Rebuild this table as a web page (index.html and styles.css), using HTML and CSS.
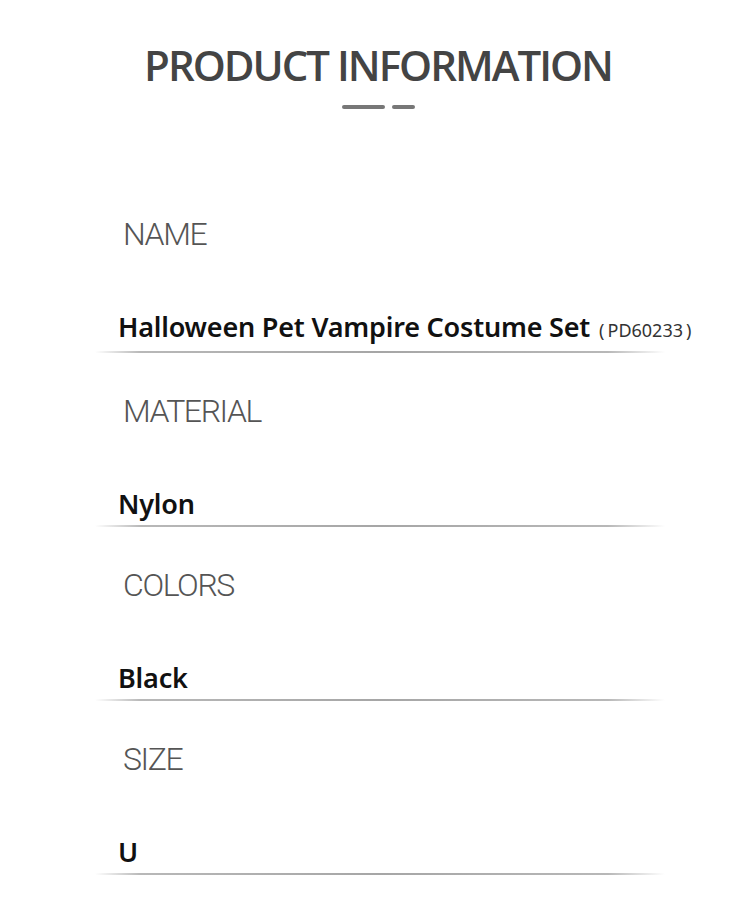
FILE: index.html
```html
<!DOCTYPE html>
<html lang="en">
<head>
<meta charset="utf-8">
<title>Product Information</title>
<link rel="stylesheet" href="styles.css">
</head>
<body>
<div class="page">
  <header class="head">
    <h1 class="title">PRODUCT INFORMATION</h1>
    <div class="dashes"><span class="dash dash-long"></span><span class="dash dash-short"></span></div>
  </header>
  <section class="info">
    <div class="row">
      <div class="label">NAME</div>
      <div class="value">Halloween Pet Vampire Costume Set<span class="code">(&#8201;PD60233&#8201;)</span></div>
    </div>
    <div class="row">
      <div class="label">MATERIAL</div>
      <div class="value">Nylon</div>
    </div>
    <div class="row">
      <div class="label">COLORS</div>
      <div class="value">Black</div>
    </div>
    <div class="row">
      <div class="label">SIZE</div>
      <div class="value">U</div>
    </div>
  </section>
</div>
</body>
</html>
```
FILE: styles.css
```css
html, body {
  margin: 0;
  padding: 0;
  background: #ffffff;
}
.page {
  width: 756px;
  padding-top: 40px;
  box-sizing: border-box;
}
.head {
  display: flex;
  flex-direction: column;
  align-items: center;
}
.title {
  margin: 0;
  font-family: "Open Sans", sans-serif;
  font-weight: 600;
  font-size: 42px;
  line-height: 50px;
  color: #444444;
  letter-spacing: -2px;
}
.dashes {
  display: flex;
  gap: 7px;
  margin-top: 15px;
}
.dash {
  display: block;
  height: 4px;
  border-radius: 2px;
  background: #777777;
}
.dash-long { width: 43px; }
.dash-short { width: 23px; }
.info {
  margin-top: 81px;
  margin-left: 95px;
  width: 570px;
  display: flex;
  flex-direction: column;
}
.row {
  display: flex;
  flex-direction: column;
  padding-bottom: 14px;
}
.row::after {
  content: "";
  display: block;
  height: 2px;
  background: linear-gradient(to right, rgba(170,170,170,0) 0%, #b8b8b8 8%, #a6a6a6 50%, #b8b8b8 90%, rgba(170,170,170,0) 100%);
  margin-top: 4px;
}
.label {
  padding-left: 28px;
  margin-top: 24px;
  font-family: "Roboto", sans-serif;
  font-weight: 300;
  font-size: 32px;
  line-height: 40px;
  color: #555555;
  letter-spacing: -1.4px;
}
.value {
  padding-left: 23px;
  margin-top: 56px;
  font-family: "Noto Sans", sans-serif;
  font-weight: 600;
  font-size: 27px;
  line-height: 34px;
  color: #111111;
  white-space: nowrap;
  letter-spacing: -0.2px;
}
.code {
  margin-left: 9px;
  font-size: 18px;
  font-weight: 400;
  color: #333333;
  letter-spacing: 0;
}
```
